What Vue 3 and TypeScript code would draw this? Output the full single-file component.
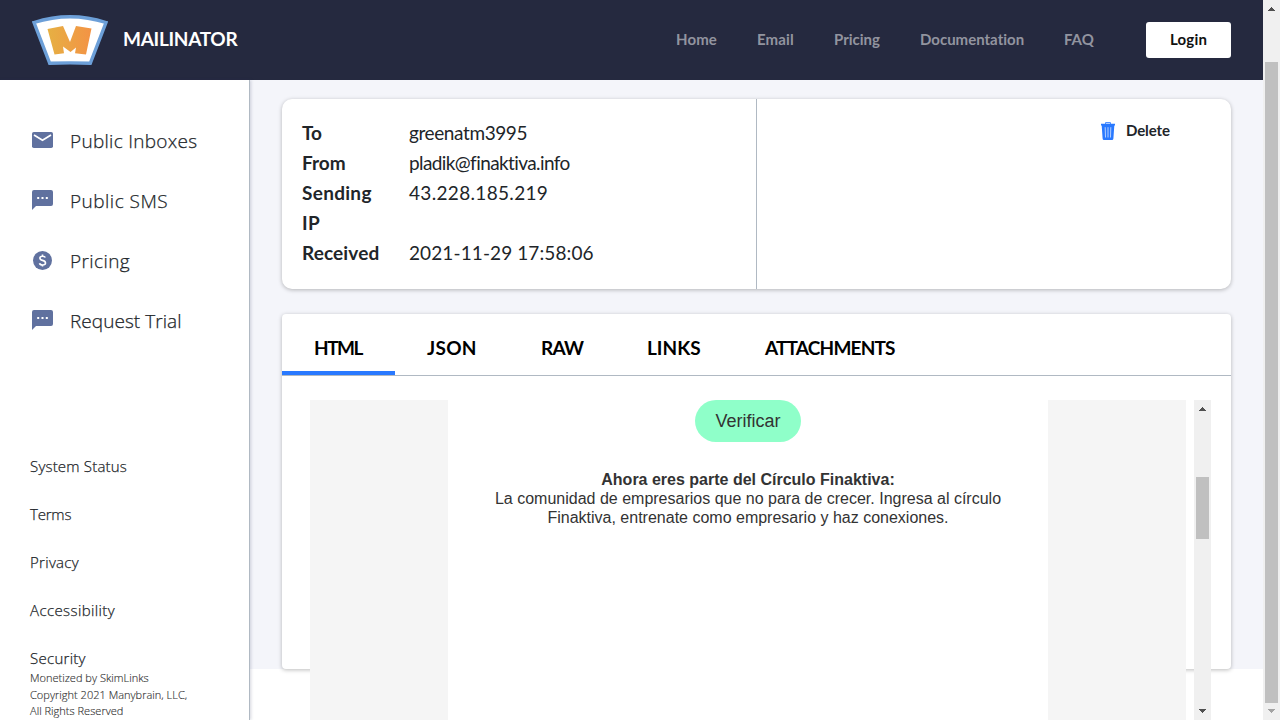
<script setup lang="ts">
interface NavItem { label: string; cls: string }
interface SideItem { label: string; icon: 'mail' | 'chat' | 'coin'; cls: string }
interface Row { key: string; value: string; kcls: string; vcls: string }

const nav: NavItem[] = [
  { label: 'Home', cls: 'n-home' },
  { label: 'Email', cls: 'n-email' },
  { label: 'Pricing', cls: 'n-pricing' },
  { label: 'Documentation', cls: 'n-docs' },
  { label: 'FAQ', cls: 'n-faq' },
]
const side: SideItem[] = [
  { label: 'Public Inboxes', icon: 'mail', cls: 's-inbox' },
  { label: 'Public SMS', icon: 'chat', cls: 's-sms' },
  { label: 'Pricing', icon: 'coin', cls: 's-pricing' },
  { label: 'Request Trial', icon: 'chat', cls: 's-trial' },
]
const links: NavItem[] = [
  { label: 'System Status', cls: 'l-status' },
  { label: 'Terms', cls: 'l-terms' },
  { label: 'Privacy', cls: 'l-privacy' },
  { label: 'Accessibility', cls: 'l-access' },
  { label: 'Security', cls: 'l-security' },
]
const rows: Row[] = [
  { key: 'To', value: 'greenatm3995', kcls: 'k-to', vcls: 'v-to' },
  { key: 'From', value: 'pladik@finaktiva.info', kcls: 'k-from', vcls: 'v-from' },
  { key: 'Sending IP', value: '43.228.185.219', kcls: 'k-ip', vcls: 'v-ip' },
  { key: 'Received', value: '2021-11-29 17:58:06', kcls: 'k-recv', vcls: 'v-recv' },
]
const tabs: NavItem[] = [
  { label: 'HTML', cls: 't-html' },
  { label: 'JSON', cls: 't-json' },
  { label: 'RAW', cls: 't-raw' },
  { label: 'LINKS', cls: 't-links' },
  { label: 'ATTACHMENTS', cls: 't-att' },
]
</script>

<template>
  <div class="window">
    <div class="page">
      <header class="top">
        <svg class="logo" width="76" height="51" viewBox="0 0 76 51">
          <defs>
            <linearGradient id="mg" x1="0" y1="0" x2="1" y2="0">
              <stop offset="0" stop-color="#e6b043" />
              <stop offset="1" stop-color="#f39345" />
            </linearGradient>
          </defs>
          <path d="M2 7.500Q38-4 74 7.500L58.300 48.300Q38 47.500 17.700 48.300Z" fill="#fff" stroke="#6c9fd8" stroke-width="3.400" />
          <path d="M15.500 14L31 11L38 27L44 11L59.500 13.500L54 39.500L43 38.200L44 32.500L38.500 37L31 31.500L32 38.200L22.500 39.500Z" fill="url(#mg)" />
        </svg>
        <span class="brand">MAILINATOR</span>
        <nav class="nav">
          <a v-for="n in nav" :key="n.label" :class="n.cls">{{ n.label }}</a>
        </nav>
        <button class="login">Login</button>
      </header>
      <div class="body">
        <aside class="side">
          <ul class="menu">
            <li v-for="s in side" :key="s.label">
              <svg v-if="s.icon === 'mail'" class="envelope" width="21" height="16" viewBox="0 0 21 16">
                <rect width="21" height="16" rx="1.800" fill="#60719f" />
                <path d="M2 3L10.500 8.300L19 3" fill="none" stroke="#fff" stroke-width="1.700" />
              </svg>
              <svg v-else-if="s.icon === 'chat'" class="chat" width="21" height="20" viewBox="0 0 21 20">
                <path d="M2 0H19Q21 0 21 2V14Q21 16 19 16H4L0 20V2Q0 0 2 0Z" fill="#60719f" />
                <path d="M5.200 7H7.200V9H5.200ZM9.500 7H11.500V9H9.500ZM13.800 7H15.800V9H13.800Z" fill="#fff" />
              </svg>
              <svg v-else class="coin" width="19" height="19" viewBox="0 0 19 19">
                <circle cx="9.500" cy="9.500" r="9.500" fill="#60719f" />
                <path d="M12.300 6.600Q11.800 5.200 9.500 5.200Q6.900 5.200 6.900 7.100Q6.900 8.900 9.500 9.400Q12.500 10 12.500 12Q12.500 14 9.600 14Q6.900 14 6.500 12.300M9.500 3.600V5.500M9.500 13.800V15.600" fill="none" stroke="#fff" stroke-width="1.600" />
              </svg>
              <span :class="s.cls">{{ s.label }}</span>
            </li>
          </ul>
          <ul class="links">
            <li v-for="l in links" :key="l.label" :class="l.cls">{{ l.label }}</li>
          </ul>
          <p class="legal">Monetized by SkimLinks<br>Copyright 2021 Manybrain, LLC,<br>All Rights Reserved</p>
        </aside>
        <main class="main">
          <section class="card info">
            <dl class="fields">
              <template v-for="r in rows" :key="r.key">
                <dt :class="r.kcls">{{ r.key }}</dt>
                <dd :class="r.vcls">{{ r.value }}</dd>
              </template>
            </dl>
            <div class="actions">
              <svg width="14" height="18" viewBox="0 0 14 18">
                <path d="M4.500 1.800V.7H9.500V1.800" fill="none" stroke="#2979ff" stroke-width="1" />
                <path d="M0 1.700H14V3.500H13.300L12.400 16.500Q12.300 18 11 18H3Q1.700 18 1.600 16.500L.7 3.500H0Z" fill="#2979ff" />
                <path d="M4.200 5.200L4.500 15.500M7 5.200V15.500M9.800 5.200L9.500 15.500" stroke="#b5d0ff" stroke-width="1" />
              </svg>
              <span class="delete">Delete</span>
            </div>
          </section>
          <section class="card message">
            <div class="tabs">
              <div v-for="(t, i) in tabs" :key="t.label" class="tab" :class="[t.cls, { active: i === 0 }]">{{ t.label }}</div>
            </div>
            <div class="frame">
              <div class="mail">
                <div class="sheet">
                  <a class="verify">Verificar</a>
                  <p><b>Ahora eres parte del Círculo Finaktiva:</b><br>La comunidad de empresarios que no para de crecer. Ingresa al círculo<br>Finaktiva, entrenate como empresario y haz conexiones.</p>
                </div>
              </div>
              <div class="bar inner">
                <svg class="arrow" width="7" height="4" viewBox="0 0 7 4"><path d="M3 0H4V1H5V2H6V3H7V4H0V3H1V2H2V1H3Z" fill="#505050" /></svg>
                <div class="thumb"></div>
                <svg class="arrow" width="7" height="4" viewBox="0 0 7 4"><path d="M0 0H7V1H6V2H5V3H4V4H3V3H2V2H1V1H0Z" fill="#505050" /></svg>
              </div>
            </div>
          </section>
        </main>
      </div>
    </div>
    <div class="bar outer">
      <svg class="arrow" width="7" height="4" viewBox="0 0 7 4"><path d="M3 0H4V1H5V2H6V3H7V4H0V3H1V2H2V1H3Z" fill="#505050" /></svg>
      <div class="thumb"></div>
      <svg class="arrow" width="7" height="4" viewBox="0 0 7 4"><path d="M0 0H7V1H6V2H5V3H4V4H3V3H2V2H1V1H0Z" fill="#a3a3a3" /></svg>
    </div>
  </div>
</template>

<style>
body { margin: 0; overflow: hidden; background: #fff; }
</style>

<style scoped>
* { box-sizing: border-box; }
ul, dl, dd, p { margin: 0; padding: 0; list-style: none; }
.window { display: flex; width: 1280px; height: 720px; overflow: hidden; font-family: Lato, sans-serif; font-variant-ligatures: none; color: #212529; }
.page { width: 1263px; display: flex; flex-direction: column; }
.top { flex: none; height: 80px; background: #25293f; display: flex; align-items: center; padding: 0 32px; }
.logo { flex: none; margin-right: 15px; }
.brand { color: #fff; font-weight: 700; font-size: 19px; width: 116px; white-space: nowrap; letter-spacing: -0.300px; padding-bottom: 3px; }
.nav { margin-left: auto; display: flex; color: #92949f; font-weight: 700; font-size: 15px; padding-bottom: 2px; }
.nav a { white-space: nowrap; }
.n-home { width: 81px; letter-spacing: .1px; }
.n-email { width: 77px; letter-spacing: .15px; }
.n-pricing { width: 86px; }
.n-docs { width: 144px; }
.n-faq { width: 82px; }
.login { width: 85px; height: 36px; border: 0; border-radius: 3px; background: #fff; padding: 0 0 2px; font: 700 15px Lato, sans-serif; letter-spacing: .2px; color: #111; }
.body { flex: 1; min-height: 0; display: flex; }
.side { flex: none; width: 250px; border-right: 1px solid #b0b9c3; box-shadow: 1px 0 3px rgba(40, 50, 90, .2); z-index: 1; padding: 31px 0 0 30px; background: #fff; font-family: "Open Sans", sans-serif; font-weight: 300; -webkit-text-stroke: .25px currentColor; }
.menu li { height: 60px; display: flex; align-items: center; font-size: 19px; white-space: nowrap; }
.menu svg { flex: none; margin: 0 17px 0 2px; }
.menu .envelope { margin-bottom: 2px; }
.menu .chat { margin-bottom: 2px; }
.menu .coin { margin: 0 18px 1px 3px; }
.s-inbox { letter-spacing: .28px; }
.s-sms { letter-spacing: .48px; }
.s-pricing { letter-spacing: .4px; }
.s-trial { letter-spacing: .05px; }
.links { margin-top: 103px; }
.links li { height: 48px; line-height: 24px; font-size: 15px; }
.links li:last-child { height: 24px; }
.l-status { letter-spacing: .2px; }
.l-terms { letter-spacing: -.2px; }
.l-privacy { letter-spacing: .3px; }
.l-access { letter-spacing: .4px; }
.l-security { letter-spacing: .28px; }
.legal { font-size: 11px; line-height: 16.500px; color: #333; letter-spacing: .02px; -webkit-text-stroke-width: .15px; }
.main { flex: 1; height: 589px; background: #f4f5fa; padding: 19px 32px 0; }
.card { background: #fff; box-shadow: 0 1px 4px rgba(0, 0, 0, .27); }
.info { height: 190px; border-radius: 10px; display: flex; }
.fields { width: 475px; border-right: 1px solid #b0b9c3; padding: 19px 0 0 20px; display: grid; grid-template-columns: 107px 1fr; grid-template-rows: 30px 30px 60px 30px; line-height: 30px; font-size: 19px; }
.fields dt { width: 80px; font-weight: 700; }
.k-ip { letter-spacing: .3px; }
.k-recv { letter-spacing: .12px; }
.v-to { letter-spacing: -.4px; }
.v-from { letter-spacing: -.6px; }
.v-ip { letter-spacing: .32px; }
.v-recv { letter-spacing: .1px; }
.actions { flex: 1; display: flex; justify-content: flex-end; padding: 22px 61px 0 0; gap: 11px; height: 41px; align-items: center; }
.delete { font-size: 15px; font-weight: 700; line-height: 18px; width: 44px; white-space: nowrap; padding-bottom: 1px; letter-spacing: -.1px; }
.message { margin-top: 25px; height: 355px; border-radius: 4px; }
.tabs { height: 62px; border-bottom: 1px solid #b0b9c3; display: flex; }
.tab { padding: 3px 0 0 32px; line-height: 61px; height: 61px; font-size: 19px; font-weight: 700; color: #000; white-space: nowrap; }
.active { border-bottom: 4px solid #2979ff; }
.t-html { width: 113px; letter-spacing: -1.500px; }
.t-json { width: 114px; letter-spacing: .3px; }
.t-raw { width: 106px; letter-spacing: -.8px; }
.t-links { width: 118px; }
.t-att { width: 195px; letter-spacing: -.82px; }
.frame { margin: 24px 20px 0 28px; height: 320px; display: flex; gap: 8px; }
.mail { flex: 1; background: #f5f5f5; display: flex; justify-content: center; }
.sheet { width: 600px; background: #fff; text-align: center; font-family: "Liberation Sans", Arial, sans-serif; font-size: 16px; line-height: 19px; color: #333; }
.verify { display: block; width: 106px; height: 42px; margin: 0 auto 28px; border-radius: 21px; background: #8fffc9; font-size: 18px; line-height: 42px; }
.bar { flex: none; width: 17px; background: #f0f0f0; display: flex; flex-direction: column; align-items: center; }
.bar .thumb { width: 13px; background: #c0c0c0; }
.inner { padding: 7px 0; }
.inner .thumb { height: 62px; margin: 66px 0 auto; }
.outer { padding: 7px 0; }
.outer .thumb { height: 641px; margin: 51px 0 auto; }
</style>
